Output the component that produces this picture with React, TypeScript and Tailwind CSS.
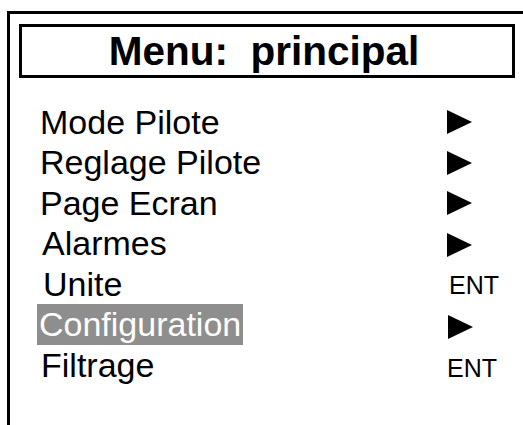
import React from "react";

type Row = { label: string; right: "arrow" | "ent"; pl: number; rx: number; dy: number; h: string; sel?: boolean };

const rows: Row[] = [
  { label: "Mode Pilote", right: "arrow", pl: 0, rx: 0, dy: 0, h: "h-[40px]" },
  { label: "Reglage Pilote", right: "arrow", pl: 0, rx: 0, dy: 0, h: "h-[41px]" },
  { label: "Page Ecran", right: "arrow", pl: 0, rx: 0, dy: 0, h: "h-[40px]" },
  { label: "Alarmes", right: "arrow", pl: 2, rx: 0, dy: 2, h: "h-[41px]" },
  { label: "Unite", right: "ent", pl: 3, rx: 2, dy: 2, h: "h-[40px]" },
  { label: "Configuration", right: "arrow", pl: 0, rx: 1, dy: 4, h: "h-[41px]", sel: true },
  { label: "Filtrage", right: "ent", pl: 1, rx: 0, dy: 6, h: "h-[40px]" },
];

function Tri() {
  return (
    <svg width="25" height="24" viewBox="0 0 25 24" className="block">
      <polygon points="0,0 25,12 0,24" fill="#000" />
    </svg>
  );
}

export default function App() {
  return (
    <div
      className="w-[523px] h-[425px] bg-white overflow-hidden pt-[11px] pl-[7px]"
      style={{ fontFamily: '"Liberation Sans", Arial, sans-serif' }}
    >
      <div className="h-[414px] border-l-[3px] border-t-[3px] border-black pt-[10px] pl-[9px] pr-[8px]">
        <div className="h-[54px] border-[3px] border-black flex items-center justify-center">
          <span className="text-[40.5px] font-bold leading-none text-black mt-[1px] ml-[-6px]">Menu:&nbsp; principal</span>
        </div>
        <div className="mt-[24px] flex flex-col">
          {rows.map((r, i) => (
            <div key={i} className={r.h + " flex items-center"}>
              <div className="w-[428px] pl-[21px]">
                <span
                  className={
                    "inline-block text-[34px] leading-[41px] " +
                    (r.sel ? "bg-[#8e8e8e] text-white pl-[2px] pr-[2px]" : "text-black")
                  }
                  style={{ marginLeft: r.sel ? -3 : r.pl }}
                >
                  {r.label}
                </span>
              </div>
              <div className="flex items-center" style={{ marginLeft: r.rx, marginTop: r.dy }}>
                {r.right === "arrow" ? (
                  <Tri />
                ) : (
                  <span className="text-[25px] leading-none text-black">ENT</span>
                )}
              </div>
            </div>
          ))}
        </div>
      </div>
    </div>
  );
}
